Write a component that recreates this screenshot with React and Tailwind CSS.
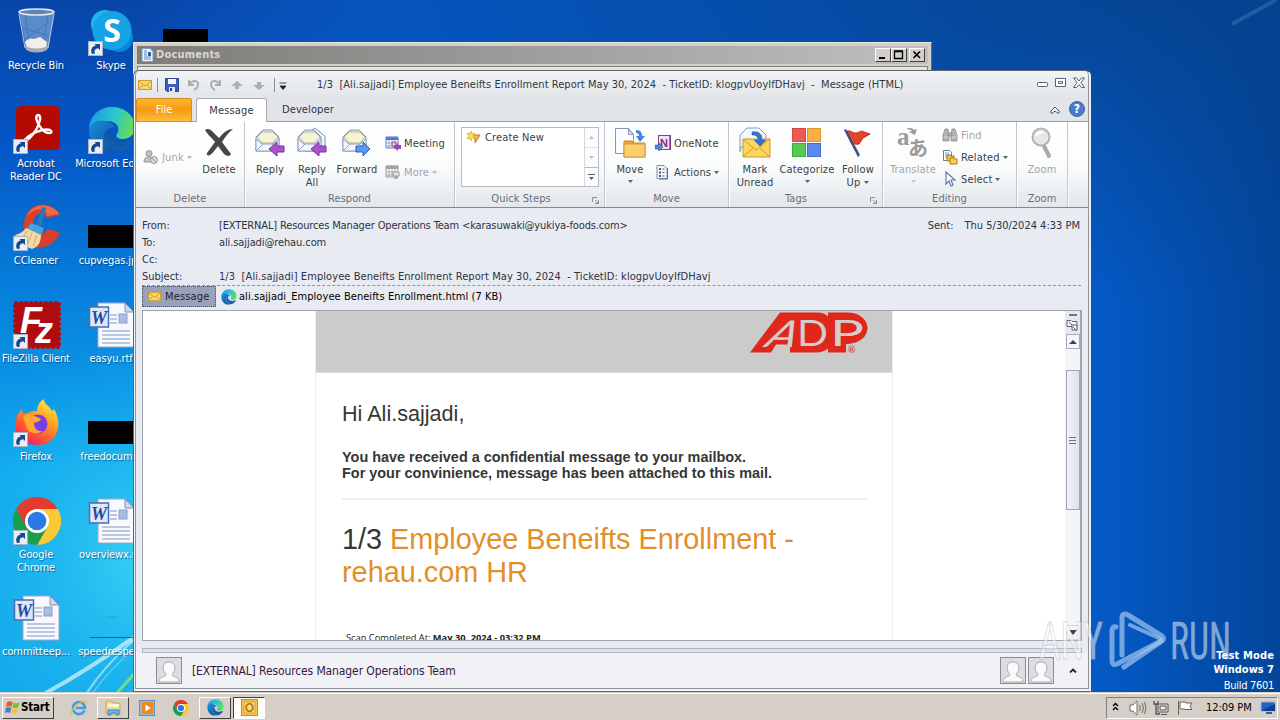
import clsx from 'clsx';

const UI = "font-['DejaVu_Sans_Condensed','DejaVu_Sans',sans-serif] [font-stretch:condensed]";

/* ---------- small shared pieces ---------- */

function Caret({ className = 'text-[#5a5f68]' }) {
  return (
    <svg width="5" height="3" viewBox="0 0 5 3" className={clsx('shrink-0', className)}>
      <path d="M0 0h5L2.5 3z" fill="currentColor" />
    </svg>
  );
}

function Shortcut() {
  return (
    <svg width="15" height="15" viewBox="0 0 15 15" className="absolute left-0 bottom-0">
      <rect x=".5" y=".5" width="14" height="14" fill="#e9eef5" stroke="#a8b4c4" />
      <path d="M4 13c-2-4 0-8 4-8.500L6.500 3H12v6l-1.800-1.800C7 7.500 6 9.500 7 12.500z" fill="#164a8c" />
    </svg>
  );
}

function EdgeLogo({ size }) {
  return (
    <svg width={size} height={size} viewBox="0 0 48 48" className="shrink-0">
      <defs>
        <linearGradient id="edgeTop" x1="0" y1=".4" x2="1" y2=".6">
          <stop offset="0" stopColor="#1b9de2" />
          <stop offset=".5" stopColor="#2bc3d2" />
          <stop offset="1" stopColor="#6be04c" />
        </linearGradient>
        <linearGradient id="edgeLow" x1="0" y1="0" x2="1" y2="1">
          <stop offset="0" stopColor="#1a8fdc" />
          <stop offset="1" stopColor="#0c4f9e" />
        </linearGradient>
      </defs>
      <path d="M1 22C2 9 12 1 24 1c14 0 23 10 23 20 0 8-6 12-12 12-5 0-8-2-6-5 4-6-1-13-9-13C10 15 3 18 1 22z" fill="url(#edgeTop)" />
      <path d="M1 22c2-6 10-9 17-7 5 1 9 4 9 7-5-2-11 2-11 10 0 7 5 12 12 14-14 4-28-7-27-24z" fill="url(#edgeLow)" />
      <path d="M18 24c-4 10 4 19 14 18 6-1 10-4 13-9-12 6-24 3-24-10-1 0-2 0-3 1z" fill="#0f5ba8" />
      <path d="M16 32c0 7 5 12 12 14 8 0 15-6 17-13-5 5-9 8-15 8-7 0-12-5-12-12z" fill="#125fae" />
    </svg>
  );
}

function ChromeLogo({ size }) {
  return (
    <svg width={size} height={size} viewBox="0 0 48 48">
      <path d="M24 12h20.800A24 24 0 0 1 24 48l10.400-18z" fill="#fcc934" />
      <path d="M3.200 12A24 24 0 0 1 44.800 12H24L13.600 30z" fill="#e33b2e" />
      <path d="M3.200 12A24 24 0 0 0 24 48l10.400-18H13.600z" fill="#1e9e4a" />
      <circle cx="24" cy="24" r="12" fill="#fff" />
      <circle cx="24" cy="24" r="9.300" fill="#2b78e8" />
    </svg>
  );
}

/* ---------- desktop icons ---------- */

function RecycleBin() {
  return (
    <svg width="48" height="48" viewBox="0 0 48 48">
      <path d="M6 3h35l-6 37q-1 4-11 4t-11-4z" fill="#9fc2e6" opacity=".55" />
      <path d="M12 5l5 34M35 5l-5 34M10 20l26 8M14 30l22-16" stroke="#3f74b8" strokeWidth="1.500" opacity=".6" fill="none" />
      <path d="M12 34q4-5 9-3l6-2 7 5-1 7q-9 4-19 0z" fill="#f2efe8" />
      <ellipse cx="23.500" cy="4" rx="17.500" ry="3" fill="#5e87b8" stroke="#dfe7ee" strokeWidth="1.600" />
      <path d="M12 38q11 5 23 0l-1 4q-10 5-21 0z" fill="#a9adb2" />
      <path d="M6 6l6 34M41 6l-6 34" stroke="#e2ecf6" opacity=".8" />
    </svg>
  );
}

function SkypeIcon() {
  return (
    <svg width="48" height="48" viewBox="0 0 48 48">
      <circle cx="17" cy="16" r="14" fill="#23b6ee" />
      <circle cx="31" cy="30" r="14" fill="#0a86d6" />
      <circle cx="24" cy="22.500" r="19.500" fill="#16a3e6" />
      <text x="24" y="34" textAnchor="middle" fontSize="32" fontWeight="700" fontFamily="Open Sans, sans-serif" fill="#fff" className="[font-stretch:normal]">S</text>
    </svg>
  );
}

function AcrobatIcon() {
  return (
    <svg width="48" height="48" viewBox="0 0 48 48">
      <rect x="3" y="0" width="44" height="44" rx="5" fill="#b30b00" />
      <path d="M13 33c3-5 18-11 24-9 5 3-3 6-9-2-5-6-6-12-3-13 4 0 2 8-2 15-4 6-9 12-11 10-.500-.500 0-1 1-1z" fill="none" stroke="#fff" strokeWidth="2.400" />
    </svg>
  );
}

function CCleanerIcon() {
  return (
    <svg width="48" height="48" viewBox="0 0 48 48">
      <path d="M47 12C40-2 17-3 12 15s4 33 19 29c8-2 14-8 16-15l-13-3c-2 6-10 7-12 1-3-8-1-14 4-16 4-1 6 1 8 4z" fill="#d9402c" />
      <path d="M46 11C39 0 20-1 14 13c8-9 20-9 20 0z" fill="#ee6a4c" />
      <path d="M29 4l4 1-5 20-5-2z" fill="#2878b4" />
      <path d="M18 20l13 5-3 8-15-6z" fill="#4aa3d8" />
      <path d="M13 25l15 7c0 7-3 12-9 14-7-2-13-7-17-14 4-1 8-3 11-7z" fill="#f2d9a6" />
      <path d="M14 28l-5 8M19 30l-4 10M24 32l-4 11" stroke="#d2a968" />
    </svg>
  );
}

function FileZillaIcon() {
  return (
    <svg width="48" height="48" viewBox="0 0 48 48">
      <rect x="1.500" y="1.500" width="45" height="45" fill="#b00c10" stroke="#b00c10" strokeWidth="3" strokeDasharray="3 2" />
      <text x="7" y="32" fontSize="36" fontWeight="700" fontStyle="italic" fontFamily="Liberation Sans, sans-serif" fill="#fff">
        F<tspan x="22" y="42">z</tspan>
      </text>
    </svg>
  );
}

function FirefoxIcon() {
  return (
    <svg width="48" height="48" viewBox="0 0 48 48">
      <defs>
        <linearGradient id="fox" x1=".8" y1="0" x2=".2" y2="1">
          <stop offset="0" stopColor="#fff04a" />
          <stop offset=".4" stopColor="#ff9a1f" />
          <stop offset=".75" stopColor="#ff4a3d" />
          <stop offset="1" stopColor="#e3127f" />
        </linearGradient>
      </defs>
      <path d="M9 10l1 5 5-1c3-2 6-2 9-2 0-5 3-10 7-12 0 5 4 6 6 9 1 1 1 2 2 3l2-2c5 9 6 18 2 25-4 8-11 11-18 11C11 46 2 37 2 26c0-6 3-12 7-16z" fill="url(#fox)" />
      <circle cx="25" cy="25" r="9.500" fill="#7a3fe0" />
      <path d="M10 18c4-4 10-2 14 0l4 2c-1 3-5 3-7 4 0 5 3 9 9 8-8 5-17 1-17-6z" fill="#ffa62b" />
    </svg>
  );
}

function WordDoc() {
  return (
    <svg width="48" height="48" viewBox="0 0 48 48">
      <path d="M10 2h27l9 9v35H10z" fill="#f7f9fd" stroke="#9aa7c4" />
      <path d="M37 2v9h9z" fill="#cfd8ec" stroke="#8090b4" />
      <path d="M22 14h7M22 18h7M22 22h7M14 30h28M14 34h28M14 38h28M14 42h28" stroke="#7d95c8" strokeWidth="1.200" />
      <rect x="31" y="13" width="8" height="9" fill="#a9bce2" stroke="#8aa0d0" />
      <rect x="1.500" y="6" width="19" height="20" fill="#dfe7f7" stroke="#4a6cb4" strokeWidth="1.500" />
      <text x="11" y="22.500" textAnchor="middle" fontSize="18" fontWeight="700" fontStyle="italic" fontFamily="Liberation Serif, serif" fill="#23499c">W</text>
    </svg>
  );
}

const BlackBox = () => <div className="w-[48px] h-[23px] mt-[22px] bg-black" />;
const Blank = () => (
  <svg width="48" height="48" viewBox="0 0 48 48">
    <path d="M2 43.500h46" stroke="#22628a" />
    <path d="M18 23h12" stroke="#2a9fcb" />
  </svg>
);

const COL_1 = [
  { icon: RecycleBin, label: ['Recycle Bin'] },
  { icon: AcrobatIcon, label: ['Acrobat', 'Reader DC'], link: true },
  { icon: CCleanerIcon, label: ['CCleaner'], link: true },
  { icon: FileZillaIcon, label: ['FileZilla Client'], link: true },
  { icon: FirefoxIcon, label: ['Firefox'], link: true },
  { icon: () => <ChromeLogo size={48} />, label: ['Google', 'Chrome'], link: true },
  { icon: WordDoc, label: ['committeep...'] },
];

const COL_2 = [
  { icon: SkypeIcon, label: ['Skype'], link: true },
  { icon: () => <EdgeLogo size={48} />, label: ['Microsoft Edge'], link: true },
  { icon: BlackBox, label: ['cupvegas.jpg'] },
  { icon: WordDoc, label: ['easyu.rtf'] },
  { icon: BlackBox, label: ['freedocum...'] },
  { icon: WordDoc, label: ['overviewx.rtf'] },
  { icon: Blank, label: ['speedrespe...'] },
];

function IconColumn({ items, className }) {
  return (
    <div className={clsx('flex flex-col shrink-0', className)}>
      {items.map(({ icon: Icon, label, link }) => (
        <div key={label[0]} className="h-[98px] flex flex-col items-center">
          <div className="relative w-[48px] h-[48px] ml-[2px]">
            <Icon />
            {link && <Shortcut />}
          </div>
          <div className="mt-[3px] text-center text-[11px] leading-[13px] tracking-[-0.1px] text-white whitespace-nowrap [text-shadow:1px_1px_1px_rgba(0,20,60,0.5)]">
            {label.map((l) => <div key={l}>{l}</div>)}
          </div>
        </div>
      ))}
    </div>
  );
}

/* ---------- ribbon icons ---------- */

function Envelope({ double, color, right }) {
  return (
    <svg width="32" height="32" viewBox="0 0 32 32">
      {double && <path d="M9 8l10-7 10 8v15H9z" fill="#f1f4f9" stroke="#7d92b4" />}
      <path d="M2 10l7-7h9l7 7v14H2z" fill="#e8eef7" stroke="#8195b6" />
      <path d="M8 5h11l5 5-5 6H8l-5-6z" fill="#f5f2d8" stroke="#b9b489" />
      <path d="M2 12l6 5h11l6-5v12H2zM2 24l7-7M25 24l-7-7" fill="#f3f6fb" stroke="#8da0bf" />
      {right ? (
        <path d="M15 19h7v-4l7 7-7 7v-4h-7z" fill={color} stroke="#2b62b8" />
      ) : (
        <path d="M30 19h-7v-4l-8 7 8 7v-4h7z" fill={color} stroke="#7a2fa8" />
      )}
    </svg>
  );
}

const DeleteIcon = () => (
  <svg width="32" height="32" viewBox="0 0 32 32">
    <path d="M2 3c2-2 5-1 7 1l7 7c5-6 9-9 14-9-5 4-8 8-11 13 3 4 6 8 9 12-1 3-5 2-7 0l-6-8c-3 4-6 8-8 9-2 1-4 0-3-2l8-11C8 10 4 7 2 3z" fill="#45474b" />
  </svg>
);

const MoveIcon = () => (
  <svg width="32" height="32" viewBox="0 0 32 32">
    <path d="M1.500 1.500h13l5 6v19h-18z" fill="#fbfcfe" stroke="#8396b4" />
    <path d="M14.500 1.500v6h5z" fill="#d7deea" stroke="#8396b4" />
    <path d="M22 3c4 0 6 2 6 6h3l-5 6-4-6h3c0-2-1-3-3-3z" fill="#3f86dc" />
    <path d="M10 14h8l2 2h11v14H10z" fill="#eba437" stroke="#c98a2a" />
    <path d="M10 17h21v13H10z" fill="#fbcf6e" stroke="#d39a3a" />
  </svg>
);

const UnreadIcon = () => (
  <svg width="32" height="32" viewBox="0 0 32 32">
    <path d="M1 25V8l7-7h12l7 7v12H2z" fill="#f3f7fc" stroke="#7d9cc8" />
    <path d="M4 12h27v18H4z" fill="#fbd65b" stroke="#c99a2c" />
    <path d="M4 12l13 11 14-11M4 30l10-9M31 30l-10-9" fill="none" stroke="#c99a2c" />
    <path d="M13 5c7-1 10 2 10 8h4l-6 6-6-6h4c0-4-2-5-6-5z" fill="#3474cf" stroke="#2357a8" strokeWidth=".6" />
  </svg>
);

const CategorizeIcon = () => (
  <svg width="32" height="32" viewBox="0 0 32 32">
    <rect x="1.500" y="1.500" width="13" height="13" fill="#ee5a55" stroke="#d64744" />
    <rect x="16.500" y="1.500" width="13" height="13" fill="#f9b040" stroke="#db962f" />
    <rect x="1.500" y="16.500" width="13" height="13" fill="#54cb54" stroke="#3bab3b" />
    <rect x="16.500" y="16.500" width="13" height="13" fill="#5d88ee" stroke="#456dd0" />
  </svg>
);

const FlagIcon = () => (
  <svg width="32" height="32" viewBox="0 0 32 32">
    <path d="M5 4c4-1 6 3 10 2 3-1 4-3 7-1l6 2-7 4-4 6c-4 1-5-1-8-1z" fill="#e8432a" stroke="#b82c18" />
    <path d="M2 3l2-1 14 26-2 2z" fill="#3c4f86" />
  </svg>
);

const TranslateIcon = () => (
  <svg width="32" height="32" viewBox="0 0 32 32" fill="#9b9b9b">
    <text x="0" y="18" fontSize="25" fontWeight="700" fontFamily="Liberation Serif, serif">
      a<tspan x="11" y="29" fontSize="20" fontFamily="Noto Sans CJK JP, sans-serif">あ</tspan>
    </text>
    <path d="M9 2c4-2 7-1 8 1l3-1-2 6-6-3 3-1c-1-1-3-2-6-2z" />
  </svg>
);

const ZoomIcon = () => (
  <svg width="32" height="32" viewBox="0 0 32 32">
    <path d="M17 17l6 12" stroke="#a9a9a9" strokeWidth="4" strokeLinecap="round" />
    <circle cx="15" cy="10" r="8.500" fill="#e6e6e6" stroke="#b3b3b3" strokeWidth="2" />
    <path d="M10 9c1-3 4-4 7-3" stroke="#fff" strokeWidth="2" fill="none" />
  </svg>
);

const JunkIcon = () => (
  <svg width="16" height="16" viewBox="0 0 16 16" fill="#c4c4c4" stroke="#969696">
    <circle cx="6" cy="4.500" r="3" />
    <path d="M1 13c0-4 2-5 5-5 2 0 5 1 5 5z" />
    <circle cx="11" cy="11" r="3.500" fill="#ddd" />
    <path d="M8.500 8.500l5 5" />
  </svg>
);

const MeetingIcon = ({ gray }) => (
  <svg width="16" height="16" viewBox="0 0 16 16">
    <path d="M1 2h12v11H1z" fill="#fff" stroke={gray ? '#9a9a9a' : '#5478c4'} />
    <path d="M1 2h12v3H1z" fill={gray ? '#a5a5a5' : '#5478c4'} />
    <path d="M3 1v2M6 1v2M9 1v2M12 1v2M1 8h12M1 11h12M4 5v8M7 5v8M10 5v8" stroke={gray ? '#a5a5a5' : '#8ca6dc'} />
    {gray ? (
      <path d="M8 8h6v4H8zM11 12v3M9 14h4" fill="#e4e4e4" stroke="#9a9a9a" />
    ) : (
      <>
        <path d="M7 7h4v4H7z" fill="none" stroke="#d8463c" />
        <path d="M16 10h-3V8l-5 4 5 4v-2h3z" fill="#9a45c0" />
      </>
    )}
  </svg>
);

const OneNoteIcon = () => (
  <svg width="16" height="16" viewBox="0 0 16 16">
    <rect x="3.500" y=".5" width="12" height="14" fill="#f3e3f4" stroke="#8b3a94" />
    <path d="M15 1v13" stroke="#8b3a94" strokeWidth="1.500" />
    <text x="9" y="11.500" textAnchor="middle" fontSize="11" fontWeight="700" fontFamily="Liberation Sans, sans-serif" fill="#8b2a7d">N</text>
    <path d="M0 10h4V8l4 4-4 4v-2H0z" fill="#4a88dc" stroke="#2a5caa" strokeWidth=".6" />
  </svg>
);

const ActionsIcon = () => (
  <svg width="16" height="16" viewBox="0 0 16 16">
    <path d="M2 1.500h7l3 3v10H2z" fill="#f4f7fb" stroke="#7f91b0" />
    <path d="M4 4h2v2H4zM4 7.500h2v2H4zM4 11h2v2H4z" fill="#4a5b7a" />
    <path d="M7.500 5h2M7.500 8.500h2M7.500 12h2" stroke="#4a5b7a" />
    <path d="M12.500 4v11H4" stroke="#5b6f93" fill="none" />
  </svg>
);

const FindIcon = () => (
  <svg width="16" height="16" viewBox="0 0 16 16" fill="#b4b4b4" stroke="#8e8e8e" strokeWidth=".8">
    <path d="M3 2h3l1 5v7H1V8zM10 2h3l2 6v6H9V7z" />
    <path d="M6 6h4v3H6z" />
    <path d="M2 10h4M10 10h4" stroke="#e6e6e6" />
  </svg>
);

const RelatedIcon = () => (
  <svg width="16" height="16" viewBox="0 0 16 16">
    <path d="M1.500 1.500h6l2 2v8h-8z" fill="#fff" stroke="#5d7ab0" />
    <path d="M3 4h4M3 6h5M3 8h5" stroke="#7c9bd4" />
    <path d="M5 6h3l1 1h3v5H5z" fill="#f6c443" stroke="#a97b16" />
    <path d="M8 9h3l1 1h3v5H8z" fill="#fbd35a" stroke="#a97b16" />
  </svg>
);

const SelectIcon = () => (
  <svg width="16" height="16" viewBox="0 0 16 16">
    <path d="M4 1v12l3-3 2 5 2-1-2-5h4z" fill="#fff" stroke="#6079a8" strokeWidth="1.200" />
  </svg>
);

const Launcher = () => (
  <svg width="7" height="7" viewBox="0 0 7 7" className="absolute right-[5px] bottom-[3px]" fill="none" stroke="#8c9097">
    <path d="M.5 5V.5H5M3 3l3 3M6.500 3v3.500H3" />
  </svg>
);

/* ---------- ribbon ---------- */

function Group({ label, width, children, launcher, left = '' }) {
  return (
    <div className={clsx('relative h-full flex flex-col shrink-0 border-r border-[#c3c7cd] shadow-[1px_0_0_#fff]', width)}>
      <div className={clsx('flex h-[69px]', left)}>{children}</div>
      <div className="text-center text-[#696e77] leading-[17px] tracking-[0.05px]">{label}</div>
      {launcher && <Launcher />}
    </div>
  );
}

function BigButton({ icon: Icon, lines, width, caret, caretInline, disabled }) {
  return (
    <div className={clsx('flex flex-col items-center pt-[5px] shrink-0', width, disabled && 'text-[#a3a6ab]')}>
      <Icon />
      <div className="mt-[4px] leading-[13px] text-center whitespace-nowrap">
        {lines.map((l, i) => (
          <div key={l} className="flex items-center justify-center gap-[4px]">
            {l}
            {caretInline && i === lines.length - 1 && <Caret />}
          </div>
        ))}
      </div>
      {caret && <Caret className={clsx('mt-[4px]', disabled ? 'text-[#c2c5c9]' : 'text-[#5a5f68]')} />}
    </div>
  );
}

function SmallButton({ icon: Icon, label, caret, disabled }) {
  return (
    <div className={clsx('flex items-center gap-[3px] h-[16px] whitespace-nowrap', disabled && 'text-[#a3a6ab]')}>
      <Icon />
      <span className="leading-[14px] pt-px">{label}</span>
      {caret && <Caret className={disabled ? 'text-[#b5b8bd]' : 'text-[#5a5f68]'} />}
    </div>
  );
}

function Ribbon() {
  return (
    <div className="h-[86px] flex border-b border-[#858a92] bg-gradient-to-b from-white via-[#fbfcfc] to-[#e3e7eb] tracking-[0.15px]">
      <Group label="Delete" width="w-[109px]" left="pl-[7px]">
        <div className="w-[52px] pt-[27px]">
          <SmallButton icon={JunkIcon} label="Junk" caret disabled />
        </div>
        <BigButton icon={DeleteIcon} lines={['Delete']} width="w-[48px]" />
      </Group>

      <Group label="Respond" width="w-[210px]" left="pl-[5px]">
        <BigButton icon={() => <Envelope color="#a852cc" />} lines={['Reply']} width="w-[40px]" />
        <BigButton icon={() => <Envelope double color="#a852cc" />} lines={['Reply', 'All']} width="w-[44px]" />
        <BigButton icon={() => <Envelope right color="#5a9bea" />} lines={['Forward']} width="w-[46px]" />
        <div className="pl-[5px] pt-[13px] flex flex-col gap-[13px]">
          <SmallButton icon={MeetingIcon} label="Meeting" />
          <SmallButton icon={() => <MeetingIcon gray />} label="More" caret disabled />
        </div>
      </Group>

      <Group label={<span className="pr-[17px]">Quick Steps</span>} width="w-[150px]" left="pl-[6px] pt-[5px]" launcher>
        <div className="w-[138px] h-[60px] flex border border-[#b7bbc1] bg-white">
          <div className="flex-1 flex items-start gap-[3px] pl-[4px] pt-[2px]">
            <svg width="16" height="16" viewBox="0 0 16 16">
              <path d="M5 5h9l-5 8v-4z" fill="#f7b84a" stroke="#b8812a" />
              <path d="M1 3l3 1 1-3 1 3 3-1-2 3 2 2-3 0-1 3-1-3-3 1 2-3z" fill="#fbe34a" stroke="#c9a51a" strokeWidth=".6" />
            </svg>
            <span className="leading-[16px]">Create New</span>
          </div>
          <div className="w-[14px] flex flex-col border-l border-[#d4d7dc] bg-[#fafbfc]">
            <div className="h-[20px] flex items-center justify-center border-b border-[#dfe2e6]"><Caret className="rotate-180 text-[#b9bcc2]" /></div>
            <div className="h-[19px] flex items-center justify-center"><Caret className="text-[#b9bcc2]" /></div>
            <div className="flex-1 flex flex-col items-center justify-center gap-[2px] border-t border-[#b7bbc1]">
              <div className="w-[7px] h-px bg-[#5a5f68]" />
              <Caret />
            </div>
          </div>
        </div>
      </Group>

      <Group label="Move" width="w-[124px]" left="pl-[4px]">
        <BigButton icon={MoveIcon} lines={['Move']} width="w-[42px]" caret />
        <div className="pl-[4px] pt-[13px] flex flex-col gap-[13px]">
          <SmallButton icon={OneNoteIcon} label="OneNote" />
          <SmallButton icon={ActionsIcon} label="Actions" caret />
        </div>
      </Group>

      <Group label={<span className="pr-[19px]">Tags</span>} width="w-[154px]" left="pl-[2px]" launcher>
        <BigButton icon={UnreadIcon} lines={['Mark', 'Unread']} width="w-[48px]" />
        <BigButton icon={CategorizeIcon} lines={['Categorize']} width="w-[56px]" caret />
        <BigButton icon={FlagIcon} lines={['Follow', 'Up']} width="w-[46px]" caretInline />
      </Group>

      <Group label="Editing" width="w-[134px]" left="pl-[4px]">
        <BigButton icon={TranslateIcon} lines={['Translate']} width="w-[52px]" caret disabled />
        <div className="pl-[3px] pt-[5px] flex flex-col gap-[6px]">
          <SmallButton icon={FindIcon} label="Find" disabled />
          <SmallButton icon={RelatedIcon} label="Related" caret />
          <SmallButton icon={SelectIcon} label="Select" caret />
        </div>
      </Group>

      <Group label="Zoom" width="w-[51px]" left="justify-center">
        <BigButton icon={ZoomIcon} lines={['Zoom']} width="w-[48px]" disabled />
      </Group>
    </div>
  );
}

/* ---------- outlook window ---------- */

const MailIcon = ({ size = 14 }) => (
  <svg width={size} height={size} viewBox="0 0 14 14" className="shrink-0">
    <path d="M.5 2.500h13v9H.5z" fill="#fbd968" stroke="#c99b33" />
    <path d="M.5 3l6.500 5 6.500-5M.5 11l4.500-4M13.500 11L9 7" fill="none" stroke="#c99b33" />
  </svg>
);

function TitleBar() {
  return (
    <div className="h-[27px] flex items-center rounded-t-[5px] bg-gradient-to-b from-[#f1f3f5] to-[#e2e5e9] pl-[2px] pr-[3px]">
      <MailIcon />
      <div className="ml-[5px] w-px h-[14px] bg-[#8a8e95]" />
      <svg width="14" height="14" viewBox="0 0 14 14" className="ml-[7px]">
        <path d="M.5.5h13v13H2l-1.500-1.500z" fill="#3d5fc0" stroke="#2c4596" />
        <path d="M3 1h8v5H3z" fill="#f4f6fb" />
        <path d="M4 9h6v5H4z" fill="#dfe5f2" />
        <path d="M5 10h2v3H5z" fill="#2c4596" />
      </svg>
      <svg width="80" height="14" viewBox="0 0 80 14" className="ml-[8px]" fill="none" stroke="#aaaeb5" strokeWidth="2">
        <path d="M2 2v5h5M2.500 6.500C5 2 11 2 11 6c0 3-2 5-4 6" />
        <path d="M33 2v5h-5M32.500 6.500C30 2 24 2 24 6c0 3 2 5 4 6" />
        <path d="M50 3l6 5h-4v3h-4V8h-4z" fill="#aaaeb5" stroke="none" />
        <path d="M72 12l6-5h-4V4h-4v3h-4z" fill="#aaaeb5" stroke="none" />
      </svg>
      <div className="ml-[7px] w-px h-[14px] bg-[#8a8e95]" />
      <svg width="8" height="8" viewBox="0 0 8 8" className="ml-[4px] mt-[3px]"><path d="M.5 1h7M1 4h6L4 7.500z" fill="#222" stroke="#222" strokeWidth=".8" /></svg>
      <div className="ml-[30px] pt-px whitespace-pre text-[#33373d] tracking-[0.04px]">
        1/3  [Ali.sajjadi] Employee Beneifts Enrollment Report May 30, 2024  - TicketID: klogpvUoyIfDHavj  -  Message (HTML)
      </div>
      <svg width="48" height="12" viewBox="0 0 48 12" className="ml-auto mb-[3px]" fill="#fff" stroke="#5c626c">
        <rect x=".5" y="5.500" width="10" height="4" rx="1" />
        <path d="M18.500 1.500h10v8h-10zM21.500 4.500h4v2h-4z" />
        <path d="M36.500 1h3l2.500 3 2.500-3h3L44 5.500l3.500 5h-3L42 7.500l-2.500 3h-3l3.500-5z" />
      </svg>
    </div>
  );
}

function Tabs() {
  return (
    <div className="h-[24px] flex bg-[#e1e4e8] border-b border-[#9a9fa7]">
      <div className="w-[56px] h-[23px] pt-px flex items-center justify-center rounded-t-[3px] border border-b-0 border-[#d98a1c] bg-gradient-to-b from-[#fcb62e] via-[#f79b0e] to-[#fdbb3a] text-white">File</div>
      <div className="ml-[4px] w-[71px] h-[24px] pt-px flex items-center justify-center rounded-t-[3px] border border-b-0 border-[#a9adb4] bg-white text-[#33373d] tracking-[0.15px]">Message</div>
      <div className="pl-[15px] pt-[2px] flex items-center text-[#33373d] tracking-[0.1px]">Developer</div>
      <svg width="10" height="8" viewBox="0 0 10 8" className="ml-auto mt-[8px]" fill="#fff" stroke="#4c525c"><path d="M1 5l4-4 4 4v2H7.500L5 5 2.500 7H1z" /></svg>
      <div className="ml-[9px] mr-[3px] mt-[3px] w-[16px] h-[16px] rounded-full border border-[#3a62a8] bg-[#4a7bcb] flex items-center justify-center text-[12px] leading-[14px] font-bold text-white">?</div>
    </div>
  );
}

const HEADERS = [
  ['From:', '[EXTERNAL] Resources Manager Operations Team <karasuwaki@yukiya-foods.com>', 'tracking-[-0.14px]'],
  ['To:', 'ali.sajjadi@rehau.com', 'tracking-[-0.1px]'],
  ['Cc:', '', ''],
  ['Subject:', '1/3  [Ali.sajjadi] Employee Beneifts Enrollment Report May 30, 2024  - TicketID: klogpvUoyIfDHavj', 'tracking-[0.08px]'],
];

function MessageHeader() {
  return (
    <div className="pl-[6px] pr-[7px] bg-[#e8ebf2] text-[#2c3340]">
      <div className="flex justify-between pt-[9px] pr-px h-[78px] border-b border-dashed border-[#8f949e]">
        <div>
          {HEADERS.map(([k, v, tracking]) => (
            <div key={k} className="flex h-[17px] leading-[17px]">
              <div className="w-[77px]">{k}</div>
              <div className={clsx('whitespace-pre', tracking)}>{v}</div>
            </div>
          ))}
        </div>
        <div className="flex gap-[11px] leading-[17px]">
          <span>Sent:</span>
          <span>Thu 5/30/2024 4:33 PM</span>
        </div>
      </div>
      <div className="h-[24px] flex">
        <div className="w-[74px] h-[21px] flex items-center gap-[4px] pl-[5px] border border-dotted border-[#4c5264] bg-[#9aa2b9] text-[#1c2230] tracking-[0.15px]">
          <MailIcon size={13} />
          <span className="pt-[2px]">Message</span>
        </div>
        <div className="flex items-center gap-[2px] pl-[5px] h-[21px] text-black">
          <EdgeLogo size={16} />
          <span className="pt-px tracking-[0.06px]">ali.sajjadi_Employee Beneifts Enrollment.html (7 KB)</span>
        </div>
      </div>
    </div>
  );
}

function AdpLogo() {
  return (
    <svg width="118" height="44" viewBox="0 0 118 44" fontFamily="Lato, sans-serif" fontWeight="400" fill="#d3cdcd" className="[font-stretch:normal]">
      {/* red plate behind the light lettering */}
      <path d="M0 41.500L30 1.500H68q6 0 10 4v-4H98c26 1 26 30 0 31.500h-2v8.500H78v-4q-5 4-12 4H40v-8H26l-5 8z" fill="#e1261c" />
      <g fontSize="37">
        <text transform="translate(12 35.500) skewX(-30)" textLength="30" lengthAdjust="spacingAndGlyphs">A</text>
        <text x="47" y="35" textLength="31" lengthAdjust="spacingAndGlyphs">D</text>
        <text x="80" y="35" textLength="34" lengthAdjust="spacingAndGlyphs">P</text>
      </g>
      <text x="98" y="42" fontSize="9" fill="#e1261c">®</text>
    </svg>
  );
}

function ScrollBar() {
  return (
    <div className="w-[16px] shrink-0 flex flex-col items-center bg-[#f4f5f8] border-r border-[#9ea3ae]">
      <div className="w-full h-[23px] flex flex-col items-center bg-[#e4e8f0] pt-[3px] gap-[3px]">
        <div className="w-[8px] h-[2px] bg-[#70757f]" />
        <svg width="13" height="13" viewBox="0 0 13 13" fill="#f5f7fa" stroke="#5e646f" className="shrink-0">
          <path d="M1 1.500h4l1 1h5v5H1z" />
          <path d="M3 3l3 3M6 6h5v5H6zM7 8l4 4" />
        </svg>
      </div>
      <div className="w-[14px] h-[15px] flex items-center justify-center border border-[#a8adb8] bg-[#f4f6f9]">
        <svg width="8" height="4" viewBox="0 0 8 4"><path d="M0 4h8L4 0z" fill="#3c4352" /></svg>
      </div>
      <div className="mt-[21px] w-[14px] h-[140px] flex flex-col items-center justify-center gap-[2px] border border-[#a0a6b2] bg-gradient-to-r from-[#f2f4f7] to-[#dde1e9]">
        {[0, 1, 2].map((i) => <div key={i} className="w-[7px] h-px bg-[#6c727e]" />)}
      </div>
      <div className="mt-auto w-[14px] h-[15px] flex items-center justify-center border border-[#d0d4dc] bg-[#f4f6f9]">
        <svg width="8" height="5" viewBox="0 0 8 5"><path d="M0 0h8L4 5z" fill="#3c4352" /></svg>
      </div>
    </div>
  );
}

function MessageBody() {
  return (
    <div className="px-[6px] bg-[#e8ebf2]">
      <div className="w-[940px] h-[331px] flex border border-[#9ea3ae] bg-white overflow-hidden">
        <div className="flex-1 pl-[172px]">
          <div className="w-[578px] h-full border-x border-[#ededed] font-['Liberation_Sans',Arial,sans-serif] text-[#363636]">
            <div className="h-[62px] flex justify-end pr-[24px] bg-[#cbcbcb] border-b border-[#dcdcdc]"><AdpLogo /></div>
            <div className="pl-[26px] pr-[25px] pt-[28px]">
              <div className="text-[21.6px] leading-[26px]">Hi Ali.sajjadi,</div>
              <div className="mt-[22px] text-[14.45px] leading-[16px] font-bold">
                You have received a confidential message to your mailbox.<br />
                For your convinience, message has been attached to this mail.
              </div>
              <div className="mt-[17px] h-[2px] bg-[#efefef]" />
              <div className="mt-[23px] text-[28.83px] leading-[33px] text-[#e38e27]">
                <span className="text-[#363636]">1/3</span> Employee Beneifts Enrollment -<br />rehau.com HR
              </div>
              <div className="mt-[42px] pl-[4px] text-[9.3px] leading-[14px] text-[#222] whitespace-nowrap font-['Open_Sans',sans-serif] [font-stretch:normal]">
                Scan Completed At: <b>May 30, 2024 - 03:32 PM</b>
              </div>
            </div>
          </div>
        </div>
        <ScrollBar />
      </div>
    </div>
  );
}

function Avatar() {
  return (
    <svg width="26" height="27" viewBox="0 0 26 27" className="shrink-0">
      <rect x=".5" y=".5" width="25" height="26" fill="#dcdde0" stroke="#8b8d92" />
      <path d="M3 25c0-4 3-5 6-6 1-1 1-2 0-3-3-4-3-11 4-11s7 7 4 11c-1 1-1 2 0 3 3 1 6 2 6 6z" fill="#fafafa" stroke="#a9abb0" />
    </svg>
  );
}

function PeoplePane() {
  return (
    <div className="flex-1 flex flex-col bg-[#e8ebf2]">
      <div className="mx-[6px] mt-[7px] h-[5px] border border-[#b0b5c0] bg-[#dde1e9]" />
      <div className="flex-1 flex items-center bg-[#f1f2f5] pl-[20px] pr-[11px]">
        <Avatar />
        <div className="pl-[10px] text-[12px] tracking-[-0.11px] text-[#3a1640]">[EXTERNAL] Resources Manager Operations Team</div>
        <div className="ml-auto flex items-center gap-[2px]">
          <Avatar />
          <Avatar />
          <svg width="8" height="5" viewBox="0 0 8 5" className="ml-[13px]" fill="none" stroke="#222" strokeWidth="1.800"><path d="M1 4.500l3-3 3 3" /></svg>
        </div>
      </div>
    </div>
  );
}

function OutlookWindow() {
  return (
    <div className="absolute left-[133px] top-[70px] w-[958px] h-[622px] flex rounded-t-[6px] border border-[#5f646c] border-r-[#eceef2] bg-[#f0f2f5] px-px pb-[2px]">
      <div className="flex-1 flex flex-col rounded-t-[5px] border-x border-b border-[#8f949d] text-[11px] text-[#3b3f46]">
        <TitleBar />
        <Tabs />
        <Ribbon />
        <MessageHeader />
        <MessageBody />
        <PeoplePane />
      </div>
    </div>
  );
}

/* ---------- explorer window behind ---------- */

function CaptionButton({ children, className }) {
  return (
    <div className={clsx('w-[16px] h-[14px] border border-t-white border-l-white border-r-[#404040] border-b-[#404040] bg-[#d4d0c8]', className)}>
      <svg width="14" height="12" viewBox="0 0 14 12" fill="none" stroke="#000">{children}</svg>
    </div>
  );
}

function DocumentsWindow() {
  return (
    <div className="absolute left-[133px] top-[42px] w-[799px] h-[60px] border border-[#e7e4de] border-r-[#6b6b6b] bg-[#d4d0c8] p-[3px]">
      <div className="h-[18px] flex items-center bg-gradient-to-r from-[#7d7c79] to-[#c0c0c0] pl-[4px] pr-[3px]">
        <svg width="13" height="14" viewBox="0 0 13 14">
          <path d="M1 .5h8l3 3v10H1z" fill="#eef4fb" stroke="#7f9cc2" />
          <path d="M3 3h3M3 5h3M3 7h3M3 9h7M3 11h7" stroke="#5c86be" />
          <rect x="7" y="4" width="3" height="4" fill="#2e5fae" />
        </svg>
        <div className="pl-[2px] text-[11px] font-bold text-[#dcd8d0] tracking-[0.2px]">Documents</div>
        <div className="ml-auto flex">
          <CaptionButton><path d="M3 9h6" strokeWidth="2" /></CaptionButton>
          <CaptionButton><path d="M2.500 2.500h8v7h-8zM2 2h9" strokeWidth="1.300" /></CaptionButton>
          <CaptionButton className="ml-[2px]"><path d="M3.500 2.500l6.500 6.500M10 2.500L3.500 9" strokeWidth="1.700" /></CaptionButton>
        </div>
      </div>
      <div className="mt-[2px] h-[20px] border border-[#808080] bg-[#e8e6e1]" />
    </div>
  );
}

/* ---------- taskbar ---------- */

function TaskButton({ children, raised, active }) {
  return (
    <div
      className={clsx(
        'w-[32px] h-[22px] flex items-center justify-center border',
        raised && 'border-t-white border-l-white border-r-[#404040] border-b-[#404040]',
        active && 'border-t-[#404040] border-l-[#404040] border-r-white border-b-white bg-[#fdfcfb]',
        !raised && !active && 'border-transparent',
      )}
    >
      {children}
    </div>
  );
}

function Taskbar() {
  return (
    <div className="absolute left-0 bottom-0 w-full h-[28px] flex items-center border-t border-[#d4d0c8] bg-[#d5cfc7] pl-[2px] pr-[2px] text-[11px] shadow-[inset_0_1px_0_#fff]">
      <div className="w-[52px] h-[22px] mt-[2px] flex items-center gap-[1px] pl-[2px] border border-t-white border-l-white border-r-[#404040] border-b-[#404040]">
        <svg width="15" height="15" viewBox="0 0 15 15">
          <path d="M2 2c2-1 4-1 5.500 0L6.500 7C5 6 3 6 1 7z" fill="#ea5a28" />
          <path d="M8.500 2.500c2 1 4 1 6 0L13 7.500c-2 1-4 .500-5.500-.300z" fill="#7fbc33" />
          <path d="M.8 8c2-1 4-1 5.500 0L5 13c-2-1-3-1-5 0z" fill="#3b82d0" />
          <path d="M7.200 8.500c2 1 4 1 5.600 0L11.500 13.500c-2 1-4 .500-5.500-.500z" fill="#f8c32c" />
        </svg>
        <span className="text-[11.500px] font-bold tracking-[-0.2px] text-black">Start</span>
      </div>
      <div className="ml-[9px] mt-[2px] flex gap-[2px]">
        <TaskButton>
          <svg width="18" height="18" viewBox="0 0 18 18" fill="none">
            <path d="M14.500 11.500A6 6 0 1 1 15 9H6" stroke="#3f9fe0" strokeWidth="2.600" />
            <path d="M2 15C-1 17 2 9 8 5s11-4 8 0" stroke="#e9c24a" strokeWidth="1.200" />
          </svg>
        </TaskButton>
        <TaskButton raised>
          <svg width="18" height="17" viewBox="0 0 18 17">
            <path d="M2 2h6l1 2h7v11H2z" fill="#f2d98b" stroke="#c9a958" />
            <path d="M4 5h11v3H4z" fill="#fdf6d8" />
            <path d="M4 16v-5h11v5h-3v-2H7v2z" fill="#6db7e2" stroke="#3b86bb" />
          </svg>
        </TaskButton>
        <TaskButton>
          <svg width="16" height="16" viewBox="0 0 16 16">
            <rect x=".5" y=".5" width="15" height="15" fill="#8ebde2" stroke="#5b94c4" />
            <rect x="3" y="2" width="11" height="12" rx="1" fill="#f08a1c" />
            <path d="M6.500 4.500v7l5-3.500z" fill="#fff" />
          </svg>
        </TaskButton>
        <TaskButton><ChromeLogo size={16} /></TaskButton>
        <TaskButton raised><EdgeLogo size={17} /></TaskButton>
        <TaskButton active>
          <svg width="17" height="17" viewBox="0 0 17 17">
            <rect x=".5" y=".5" width="16" height="16" fill="#f6c445" stroke="#c98f1c" />
            <rect x="3" y="3" width="11" height="11" fill="#fbe08a" stroke="#d69f2c" />
            <text x="8.500" y="13" textAnchor="middle" fontSize="12" fontWeight="700" fontFamily="Liberation Sans, sans-serif" fill="#b9760e">O</text>
          </svg>
        </TaskButton>
      </div>
      <div className="ml-auto mt-[3px] w-[172px] h-[22px] flex items-center pl-[5px] border border-[#808080] border-r-white border-b-white text-black">
        <svg width="7" height="9" viewBox="0 0 7 9" fill="none" stroke="#000" strokeWidth="1.400" className="mb-[4px]"><path d="M1 4l2.500-2.500L6 4M1 8l2.500-2.500L6 8" /></svg>
        <svg width="18" height="16" viewBox="0 0 18 16" className="ml-[10px]" fill="#fff" stroke="#6d6a66">
          <path d="M1 5h3l4-4v14l-4-4H1z" />
          <path d="M10.500 5q1.500 3 0 6M13 3q3 5 0 10M15.500 2q3 6 0 12" fill="none" />
        </svg>
        <svg width="16" height="16" viewBox="0 0 16 16" className="ml-[6px]" fill="#eceae6" stroke="#55534f">
          <path d="M5 4h10v8H5zM7 6h6v4H7zM8 14.500h6" />
          <path d="M1 1v3h4V1M3 4v10h4" fill="none" strokeWidth="1.300" />
        </svg>
        <svg width="16" height="16" viewBox="0 0 16 16" className="ml-[8px]" fill="#fff" stroke="#66645f">
          <path d="M1.500 1v14M3 2h6v1h6l-2 3.500 2 3H8V9H3z" />
        </svg>
        <span className="ml-[13px] tracking-[-0.05px] whitespace-nowrap">12:09 PM</span>
        <svg width="16" height="14" viewBox="0 0 16 14" className="ml-auto mr-px">
          <path d="M1 1h14v9H1z" fill="#1f62c0" stroke="#8fb4dc" />
          <path d="M1 10L15 3v7z" fill="#0f3f92" />
          <path d="M6 12h6" stroke="#3b5e94" strokeWidth="2" />
        </svg>
      </div>
    </div>
  );
}

/* ---------- wallpaper and overlays ---------- */

function Wallpaper() {
  return (
    <svg width="1280" height="720" viewBox="0 0 1280 720" className="absolute inset-0">
      <defs>
        <linearGradient id="sky" x1="0" y1="0" x2="0" y2="1">
          <stop offset="0" stopColor="#0845a8" />
          <stop offset=".2" stopColor="#0556c6" />
          <stop offset=".42" stopColor="#0782dd" />
          <stop offset=".65" stopColor="#0fa8ee" />
          <stop offset="1" stopColor="#12a9ea" />
        </linearGradient>
        <linearGradient id="deep" x1="0" y1="0" x2="1" y2="0">
          <stop offset="0" stopColor="#0a5fc8" stopOpacity="0" />
          <stop offset=".25" stopColor="#0556c0" />
          <stop offset=".84" stopColor="#045ac6" />
          <stop offset="1" stopColor="#03459a" />
        </linearGradient>
        <radialGradient id="topShade" cx="1120" cy="-20" r="1" gradientUnits="userSpaceOnUse" gradientTransform="translate(1120 -20) scale(760 320) translate(-1120 20)">
          <stop offset="0" stopColor="#063f86" stopOpacity=".8" />
          <stop offset="1" stopColor="#063f86" stopOpacity="0" />
        </radialGradient>
        <radialGradient id="glow" cx="150" cy="560" r="220" gradientUnits="userSpaceOnUse">
          <stop offset="0" stopColor="#45e0f6" stopOpacity=".75" />
          <stop offset="1" stopColor="#1fb4f0" stopOpacity="0" />
        </radialGradient>
      </defs>
      <rect width="1280" height="720" fill="url(#sky)" />
      <rect x="140" width="1140" height="720" fill="url(#deep)" />
      <rect width="1280" height="720" fill="url(#topShade)" />
      <rect width="400" height="720" fill="url(#glow)" />
      <path d="M1232 24L1276 0" stroke="#5f9ad4" strokeWidth="4" opacity=".3" />
      <g fill="none" stroke="#fff">
        <path d="M44 694Q88 670 136 636" strokeWidth="4" opacity=".6" />
        <path d="M86 694Q106 664 134 640" strokeWidth="2" opacity=".5" />
        <path d="M92 694Q110 668 134 650" opacity=".5" />
        <path d="M116 694l18-20" stroke="#8be86a" strokeWidth="3" opacity=".8" />
      </g>
    </svg>
  );
}

function Watermark() {
  return (
    <svg width="196" height="64" viewBox="0 0 196 64" className="absolute left-[1037px] top-[609px]" fontFamily="Roboto, sans-serif" fontSize="52" fill="#fff" fillOpacity=".5">
      <text x="2" y="50" textLength="64" lengthAdjust="spacingAndGlyphs" stroke="#b4bac6" strokeOpacity=".5">ANY</text>
      <text x="133" y="50" textLength="61" lengthAdjust="spacingAndGlyphs" stroke="#9fc2ee" strokeOpacity=".3">RUN</text>
      <g fill="none" stroke="#a3c4ee" strokeOpacity=".7" strokeWidth="5" strokeLinejoin="round" strokeLinecap="round">
        <path d="M79 18q-4-1-4 4v30q0 5 5 3l44-23" />
        <path d="M85 46V9q0-6 6-3l34 21q3 2 0 5L87 58" />
        <path d="M93 16l31 14" strokeWidth="4" />
      </g>
    </svg>
  );
}

export default function App() {
  return (
    <div className={clsx('relative w-[1280px] h-[720px] overflow-hidden bg-[#0556c0]', UI)}>
      <Wallpaper />
      <div className="relative flex pt-[8px] h-[692px] overflow-hidden">
        <IconColumn items={COL_1} className="w-[72px]" />
        <IconColumn items={COL_2} className="ml-px w-[76px]" />
        <div className="ml-[14px] mt-[21px] w-[45px] h-[14px] bg-black" />
      </div>
      <DocumentsWindow />
      <OutlookWindow />
      <Watermark />
      <div className="absolute right-[6px] top-[649px] text-right text-[11px] text-white leading-[14px]">
        <div className="font-bold tracking-[0.15px]">Test Mode</div>
        <div className="font-bold">Windows 7</div>
        <div className="leading-[17px] tracking-[-0.3px]">Build 7601</div>
      </div>
      <Taskbar />
    </div>
  );
}
